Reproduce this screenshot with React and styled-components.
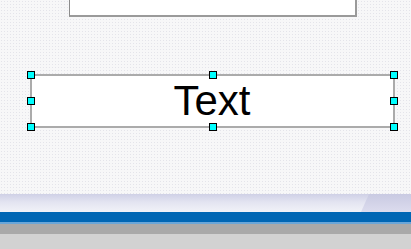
import React from "react";
import styled, { createGlobalStyle } from "styled-components";

const Global = createGlobalStyle`
  html, body { margin: 0; padding: 0; }
  body {
    background: #f7f7f8;
    font-family: "Liberation Sans", Arial, sans-serif;
  }
`;

const Page = styled.div`
  width: 411px;
  height: 249px;
  display: flex;
  flex-direction: column;
  overflow: hidden;
  background-color: #f7f7f8;
  background-image: radial-gradient(#e4e4ea 0.6px, transparent 0.8px);
  background-size: 3px 3px;
`;

const TopFrame = styled.div`
  margin-left: 69px;
  width: 288px;
  height: 17px;
  box-sizing: border-box;
  background: #ffffff;
  border-left: 1px solid #8c8c8c;
  border-right: 2px solid #9a9a9a;
  border-bottom: 2px solid #9a9a9a;
`;

const Canvas = styled.div`
  flex: 1;
  display: flex;
  flex-direction: column;
`;

const TextFrame = styled.div`
  position: relative;
  margin-top: 57px;
  margin-left: 30px;
  width: 365px;
  height: 54px;
  box-sizing: border-box;
  background: #ffffff;
  border: 2px solid #ababab;
  display: flex;
  align-items: center;
  justify-content: center;
`;

const Label = styled.span`
  font-family: "Liberation Sans", Arial, sans-serif;
  font-size: 42px;
  line-height: 1;
  color: #000;
  margin-top: -1px;
  margin-left: -1px;
`;

const Handle = styled.span`
  position: absolute;
  width: 8px;
  height: 8px;
  box-sizing: border-box;
  background: #00ffff;
  border: 1px solid #000;
  ${(p) => (p.$x === "l" ? "left: -5px;" : p.$x === "r" ? "right: -5px;" : "left: 50%; margin-left: -4px;")}
  ${(p) => (p.$y === "t" ? "top: -5px;" : p.$y === "b" ? "bottom: -5px;" : "top: 50%; margin-top: -4px;")}
`;

const Bar = styled.div`
  margin-top: auto;
  display: flex;
  flex-direction: column;
`;

const Sheen = styled.div`
  position: relative;
  height: 18px;
  background: linear-gradient(#cfd0e6 0%, #e3e4f1 45%, #f1f2f8 100%);
  &::after {
    content: "";
    position: absolute;
    top: 0;
    right: 0;
    width: 50px;
    height: 100%;
    background: linear-gradient(#c9cae2, #dcdcee);
    clip-path: polygon(8px 0, 100% 0, 100% 100%, 0 100%);
  }
`;

const Blue = styled.div`
  height: 10px;
  background: #0066b4;
  border-bottom: 2px solid #6aa6d8;
`;

const Gray = styled.div`
  height: 10px;
  background: #a9a9a9;
`;

const Base = styled.div`
  height: 15px;
  background: #d2d2d2;
`;

const handles = [
  ["l", "t"], ["c", "t"], ["r", "t"],
  ["l", "m"], ["r", "m"],
  ["l", "b"], ["c", "b"], ["r", "b"],
];

export default function App() {
  return (
    <>
      <Global />
      <Page>
        <TopFrame />
        <Canvas>
          <TextFrame>
            <Label>Text</Label>
            {handles.map(([x, y]) => (
              <Handle key={x + y} $x={x} $y={y} />
            ))}
          </TextFrame>
        </Canvas>
        <Bar>
          <Sheen />
          <Blue />
          <Gray />
          <Base />
        </Bar>
      </Page>
    </>
  );
}
